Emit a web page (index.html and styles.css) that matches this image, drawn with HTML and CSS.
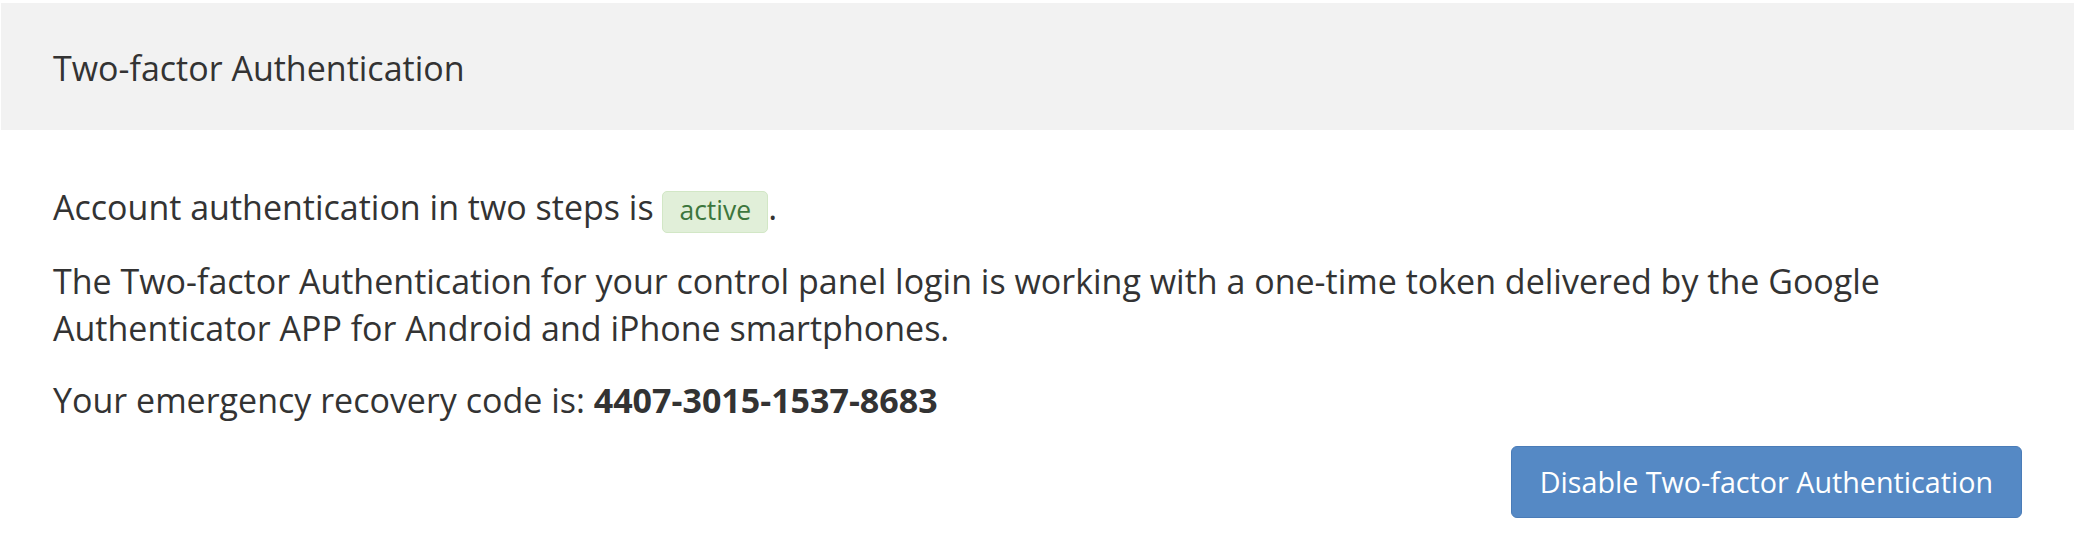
FILE: index.html
```html
<!DOCTYPE html>
<html lang="en">
<head>
<meta charset="utf-8">
<title>Two-factor Authentication</title>
<link rel="stylesheet" href="styles.css">
</head>
<body>
<section class="panel">
  <header class="panel-heading">Two-factor Authentication</header>
  <div class="panel-body">
    <p class="para">Account authentication in two steps is <span class="badge">active</span>.</p>
    <p class="para">The Two-factor Authentication for your control panel login is working with a one-time token delivered by the Google Authenticator APP for Android and iPhone smartphones.</p>
    <p class="para para-last">Your emergency recovery code is: <strong class="code">4407-3015-1537-8683</strong></p>
    <div class="actions">
      <button class="btn" type="button">Disable Two-factor Authentication</button>
    </div>
  </div>
</section>
</body>
</html>
```
FILE: styles.css
```css
html, body {
  margin: 0;
  padding: 0;
  background: #ffffff;
}
body {
  font-family: "Open Sans", "Noto Sans", "Liberation Sans", sans-serif;
  font-size: 34px;
  line-height: 47px;
  color: #333333;
}
.panel {
  margin: 3px 0 0 1px;
}
.panel-heading {
  background: #f2f2f2;
  padding: 42px 52px 38px;
}
.panel-body {
  padding: 54px 52px 39px;
}
.para {
  margin: 0 0 25px;
}
.para-last {
  margin-bottom: 22px;
}
.code {
  font-weight: 700;
}
.badge {
  display: inline-block;
  font-size: 26.5px;
  line-height: 36px;
  padding: 0 16px 4px;
  color: #3c763d;
  background: #e1efd9;
  border: 1px solid #d2e7c6;
  border-radius: 5px;
  vertical-align: baseline;
}
.actions {
  display: flex;
  justify-content: flex-end;
}
.btn {
  font-family: inherit;
  font-size: 28.7px;
  line-height: 40px;
  padding: 15px 28px;
  color: #ffffff;
  background: #5589c5;
  border: 1px solid #4a7cb8;
  border-radius: 6px;
  cursor: pointer;
}
```
